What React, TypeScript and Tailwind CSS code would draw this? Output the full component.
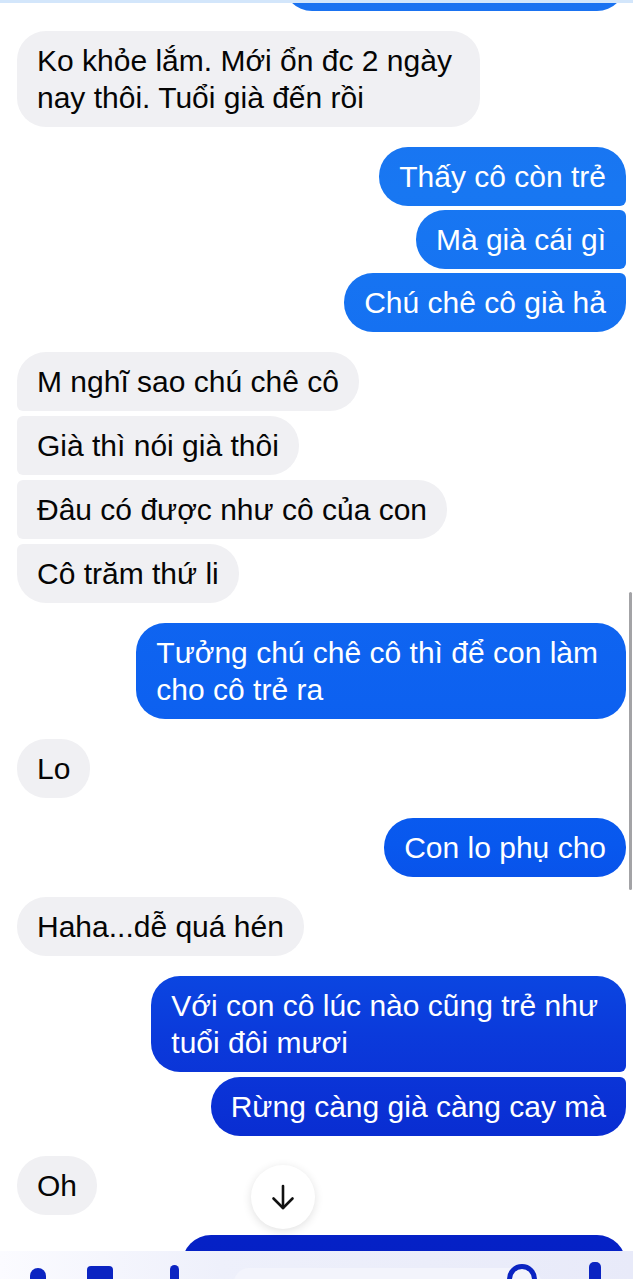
import React from "react";

type Group = { me: boolean; gap: string; msgs: string[][] };

const groups: Group[] = [
	{ me: false, gap: "gap-[5px]", msgs: [["Ko khỏe lắm. Mới ổn đc 2 ngày", "nay thôi. Tuổi già đến rồi"]] },
	{ me: true, gap: "gap-[4px]", msgs: [["Thấy cô còn trẻ"], ["Mà già cái gì"], ["Chú chê cô già hả"]] },
	{ me: false, gap: "gap-[5px]", msgs: [["M nghĩ sao chú chê cô"], ["Già thì nói già thôi"], ["Đâu có được như cô của con"], ["Cô trăm thứ li"]] },
	{ me: true, gap: "gap-[5px]", msgs: [["Tưởng chú chê cô thì để con làm", "cho cô trẻ ra"]] },
	{ me: false, gap: "gap-[5px]", msgs: [["Lo"]] },
	{ me: true, gap: "gap-[5px]", msgs: [["Con lo phụ cho"]] },
	{ me: false, gap: "gap-[5px]", msgs: [["Haha...dễ quá hén"]] },
	{ me: true, gap: "gap-[5px]", msgs: [["Với con cô lúc nào cũng trẻ như", "tuổi đôi mươi"], ["Rừng càng già càng cay mà"]] },
	{ me: false, gap: "gap-[5px]", msgs: [["Oh"]] },
];

const sentBg = "bg-[linear-gradient(180deg,#1a72f1_0%,#1877f2_15%,#1169f1_40%,#0d61f0_55%,#0858ee_66%,#0b44e0_77%,#0b3adb_81%,#0a30d4_87%,#0521c6_97%,#0520c4_100%)] bg-fixed";

function corners(me: boolean, i: number, n: number) {
	if (n === 1) return "rounded-[29px]";
	if (me) {
		if (i === 0) return "rounded-l-[29px] rounded-tr-[29px] rounded-br-[6px]";
		if (i === n - 1) return "rounded-l-[29px] rounded-tr-[6px] rounded-br-[29px]";
		return "rounded-l-[29px] rounded-r-[6px]";
	}
	if (i === 0) return "rounded-r-[29px] rounded-tl-[29px] rounded-bl-[6px]";
	if (i === n - 1) return "rounded-r-[29px] rounded-tl-[6px] rounded-bl-[29px]";
	return "rounded-r-[29px] rounded-l-[6px]";
}

function Bubble({ me, lines, shape }: { me: boolean; lines: string[]; shape: string }) {
	const multi = lines.length > 1;
	return (
		<div
			className={`${me ? `${sentBg} text-white` : "bg-[#f0f0f3] text-[#050505]"} ${shape} ${multi ? "pl-[20px] pr-[28px]" : "px-[20px]"} py-[11px] text-[30px] leading-[37px] whitespace-nowrap`}
		>
			{lines.map((l, k) => (
				<React.Fragment key={k}>
					{k > 0 && <br />}
					{l}
				</React.Fragment>
			))}
		</div>
	);
}

function Composer() {
	return (
		<div className="absolute bottom-0 left-0 right-0 h-[28px] overflow-hidden flex items-start bg-[linear-gradient(90deg,#fbfbff_0%,#eef0fb_35%,#e8eaf9_100%)]">
			<div className="ml-[30px] mt-[17px] w-[16px] h-[20px] rounded-t-[8px] bg-[#0b24c2]" />
			<div className="ml-[41px] mt-[15px] w-[26px] h-[20px] rounded-t-[4px] bg-[#0b24c2]" />
			<div className="ml-[57px] mt-[14px] w-[9px] h-[20px] rounded-t-full bg-[#0b24c2]" />
			<div className="ml-[55px] mt-[17px] w-[307px] h-[30px] rounded-[15px] bg-[#f3f4fc] flex justify-end pr-[4px]">
				<div className="-mt-[4px] w-[30px] h-[30px] rounded-full border-[5px] border-[#0b24c2]" />
			</div>
			<div className="ml-[48px] mt-[11px] w-[12px] h-[20px] rounded-t-[5px] bg-[#0b24c2]" />
		</div>
	);
}

export default function App() {
	return (
		<div className="relative w-full h-[1279px] overflow-hidden bg-white font-['Liberation_Sans',Arial,sans-serif]">
			<div className="flex flex-col gap-[20px] pl-[17px] pr-[7px]">
				<div className="flex justify-end -mt-[48px]">
					<div className={`${sentBg} rounded-[29px] w-[343px] h-[59px]`} />
				</div>
				{groups.map((g, gi) => (
					<div key={gi} className={`flex flex-col ${g.gap} ${g.me ? "items-end" : "items-start"}`}>
						{g.msgs.map((m, i) => (
							<Bubble key={i} me={g.me} lines={m} shape={corners(g.me, i, g.msgs.length)} />
						))}
					</div>
				))}
				<div className="flex justify-end">
					<div className={`${sentBg} rounded-[29px] w-[444px] h-[59px]`} />
				</div>
			</div>

			<div className="absolute top-0 left-0 right-0 h-[3px] bg-[#d3e6fb]" />

			<div className="absolute right-[1px] top-[592px] w-[3px] h-[298px] rounded-full bg-[#a3a3a6]" />

			<div className="absolute left-[251px] top-[1165px] w-[64px] h-[64px] rounded-full bg-white shadow-[0_2px_10px_rgba(0,0,0,0.12)] flex items-center justify-center">
				<svg width="26" height="28" viewBox="0 0 26 28" fill="none" stroke="#111" strokeWidth="2.6" strokeLinecap="round" strokeLinejoin="round">
					<path d="M13 3V25" />
					<path d="M3.5 15.5L13 25L22.5 15.5" />
				</svg>
			</div>

			<Composer />
		</div>
	);
}
